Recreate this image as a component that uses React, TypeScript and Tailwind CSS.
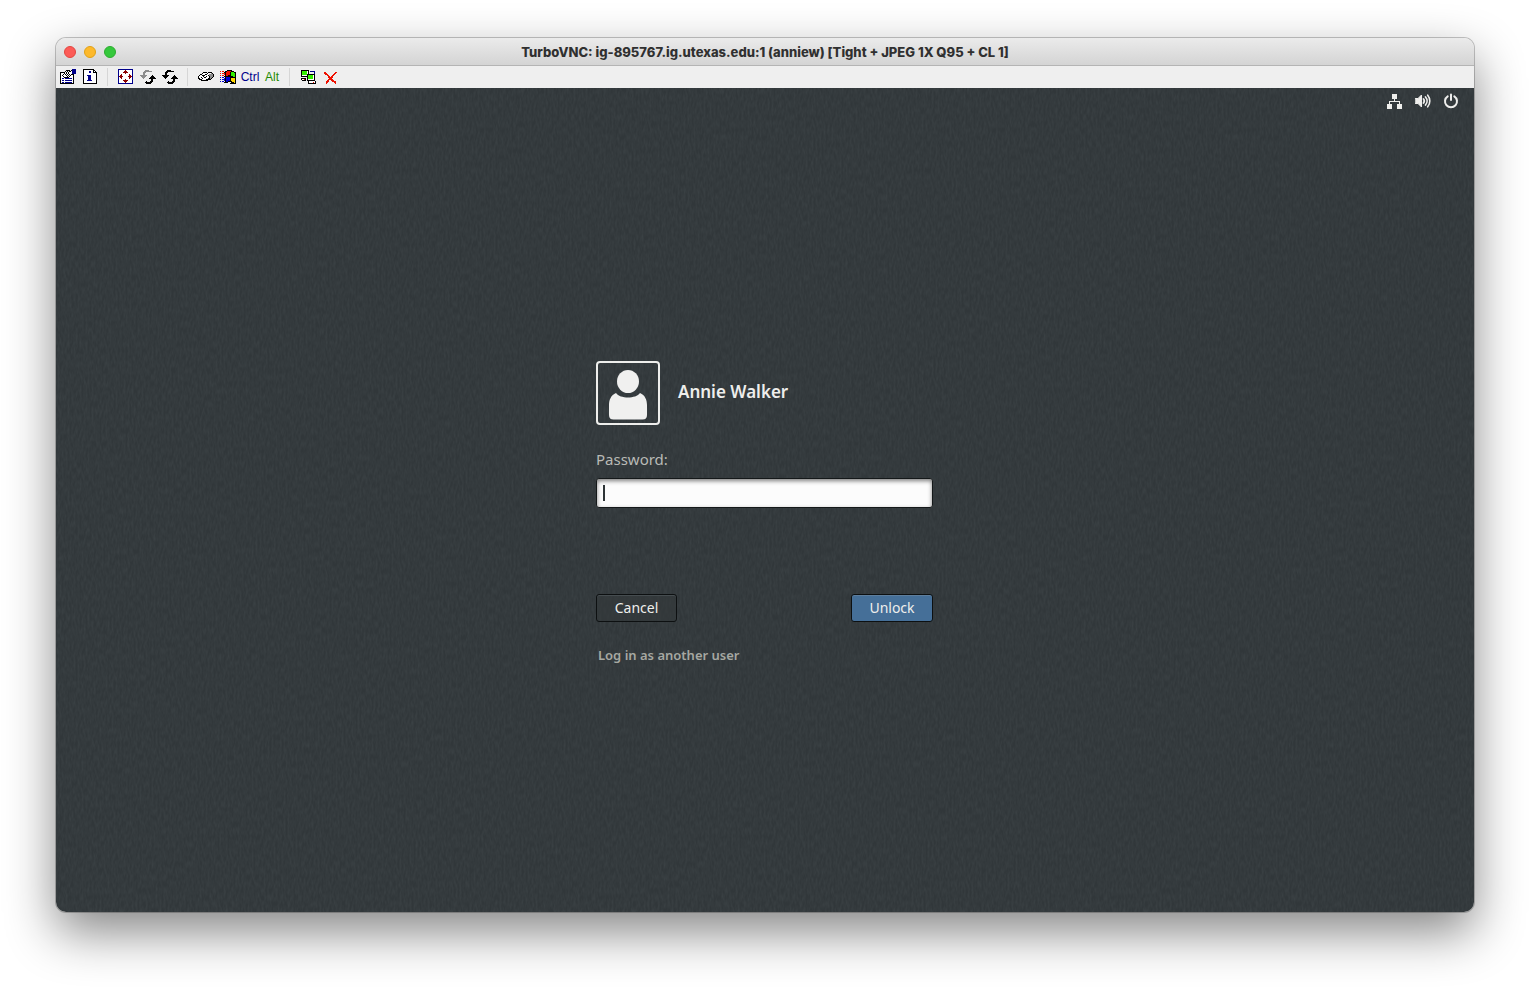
import type { ReactNode } from 'react';

const palette: Record<string, string> = {
  K: '#000000',
  B: '#00008b',
  W: '#ffffff',
  G: '#8c8c8c',
  M: '#8b0000',
  R: '#ee1100',
  L: '#33ee00',
  Y: '#ffd800',
  U: '#0000d0',
};

function PixelIcon({ rows }: { rows: string[] }) {
  return (
    <svg viewBox="0 0 16 16" className="size-4" shapeRendering="crispEdges" aria-hidden="true">
      {rows.flatMap((row, y) =>
        row
          .split('')
          .map((c, x) =>
            palette[c] ? <rect key={`${x}-${y}`} x={x} y={y} width="1" height="1" fill={palette[c]} /> : null,
          ),
      )}
    </svg>
  );
}

const options = [
  '............BBBB',
  '......KKKK.KBBBB',
  '.....KWKWKKWBBBB',
  'KKKKKWKWKWWWBBBB',
  'KWWWKWKWKWWWBBBB',
  'KWWKWKWKWKWKKK..',
  'KWKWWWKWKWKWWK..',
  'KWWKWWWKWKWWWK..',
  'KWWWKKKKKWWWWK..',
  'KWBBWBBBBBBBWK..',
  'KWWWWWWWWWWWWK..',
  'KWBBWBBBBBBBWK..',
  'KWWWWWWWWWWWWK..',
  'KWBBWBBBBBBBWK..',
  'KKKKKKKKKKKKKK..',
];

const info = [
  '.KKKKKKKKKKK....',
  '.KWWWWWWWWWKK...',
  '.KWWWWWBBWWKWK..',
  '.KWWWWWBBWWKKKK.',
  '.KWWWWWWWWWWWWK.',
  '.KWWWWWWWWWWWWK.',
  '.KWWWBBBBWWWWWK.',
  '.KWWWWBBBWWWWWK.',
  '.KWWWWBBBWWWWWK.',
  '.KWWWWBBBWWWWWK.',
  '.KWWWWBBBWWWWWK.',
  '.KWWWBBBBBWWWWK.',
  '.KWWWWWWWWWWWWK.',
  '.KWWWWWWWWWWWWK.',
  '.KKKKKKKKKKKKKK.',
];

const fullScreen = [
  'BBBBBBBBBBBBBBB.',
  'BWWWWWWMWWWWWWB.',
  'BWWWWWMMMWWWWWB.',
  'BWWWWMMMMMWWWWB.',
  'BWWWWWWMWWWWWWB.',
  'BWWMWWWWWWWMWWB.',
  'BWMMWWWWWWWMMWB.',
  'BMMMMWWWWWMMMMB.',
  'BWMMWWWWWWWMMWB.',
  'BWWMWWWWWWWMWWB.',
  'BWWWWWWMWWWWWWB.',
  'BWWWWMMMMMWWWWB.',
  'BWWWWWMMMWWWWWB.',
  'BWWWWWWMWWWWWWB.',
  'BBBBBBBBBBBBBBB.',
];

const refreshScreen = [
  '................',
  '.....GGGG.......',
  '....GGGGGGGG....',
  '...GGG..........',
  '...GG...........',
  '...GG...........',
  'GGGGGGG.....K...',
  '.GGGGG.....KKK..',
  '..GGG.....KKKKK.',
  '...G.....KKKKKKK',
  '...........KK...',
  '...........KK...',
  '......K...KKK...',
  '.....KKKKKKK....',
  '......KKKKK.....',
];

const refreshAll = refreshScreen.map((row) => row.replace(/G/g, 'K'));

const connection = [
  '................',
  '................',
  '................',
  '.....KKKK.KKKK..',
  '....KWWWWKWWWGK.',
  '..KKWWWKKWWGGGGK',
  '.KWWKKKWWWKGGGGK',
  'KWWWWKWWKWWKGGGK',
  'KWWKWWKKWWWKGGK.',
  'KKWWKWWWWWKKGK..',
  '.KKKWWWWKKKKK...',
  '...KKKKKKK......',
];

const windowsKey = [
  '................',
  '.......KKKKK....',
  'R.RR.KKRRRRKKK..',
  '....KKRRRRKLLLKK',
  'R.RRRKRRRRKLLLLK',
  '....RKRRRRKLLLLK',
  'R.RR.KRRKKKLLLLK',
  '....KKKKKKKKKLLK',
  'U.UU.KUUUUKKKKKK',
  '....UKUUUUKYYYYK',
  'U.UUUKUUUUKYYYYK',
  '....UKUUUUKYYYYK',
  'U.UU.KUUKKKKYYYK',
  '....KKKK...KKKYK',
  '..........KKKKKK',
];

const ctrlAltDel = [
  '................',
  '.KKKKKKKK.......',
  '.KLLLLLWK.BBBBB.',
  '.KLLLLLWK.....B.',
  '.KLLLLLWK.....B.',
  '.KLLLLLKKKKKKKK.',
  '.KWWWWWKLLLLLWK.',
  '.KKKKKKKLLLLLWK.',
  '.......KLLLLLWK.',
  '.KKKKK.KLLLLLWK.',
  '.KWWRK.KWWWWWWK.',
  '..KKKK.KKKKKKKK.',
  '........KWWWWWWK',
  '........KWWWWRWK',
  '........KKKKKKKK',
];

const disconnect = [
  '................',
  '................',
  '................',
  '..RR.........RR.',
  '..RRR.......RR..',
  '...RRR.....RR...',
  '.....RR...RR....',
  '......RR.RR.....',
  '......RRRRR.....',
  '.......RRR......',
  '......RRRRR.....',
  '.....RR..RRR....',
  '....RRR...RRRR..',
  '....RR......RR..',
  '....R........R..',
];

function Tool({ label, children }: { label: string; children: ReactNode }) {
  return (
    <button type="button" aria-label={label} title={label} className="flex h-5 w-[22px] items-center justify-center">
      {children}
    </button>
  );
}

function Separator() {
  return <span className="mr-[7px] ml-1.5 h-[18px] w-px bg-[#d6d6d6]" />;
}

function TitleBar() {
  return (
    <header className="grid h-7 shrink-0 grid-cols-[1fr_auto_1fr] items-center border-b border-[#b4b4b4] bg-linear-to-b from-[#ebebeb] to-[#d4d4d4] px-2">
      <div className="flex gap-2">
        <button type="button" aria-label="Close" className="size-3 rounded-full border border-[#e2463f] bg-[#fc5b57]" />
        <button type="button" aria-label="Minimize" className="size-3 rounded-full border border-[#e1a116] bg-[#fdb92c]" />
        <button type="button" aria-label="Zoom" className="size-3 rounded-full border border-[#2dac2f] bg-[#35c83c]" />
      </div>
      <h1 className="font-['Inter',sans-serif] text-[13px] leading-5 font-extrabold whitespace-nowrap text-[#303030]">
        TurboVNC: ig-895767.ig.utexas.edu:1 (anniew) [Tight + JPEG 1X Q95 + CL 1]
      </h1>
    </header>
  );
}

function Toolbar() {
  return (
    <nav
      aria-label="Viewer tools"
      className="flex h-[22px] shrink-0 items-center bg-[#efefef] font-['Liberation_Sans',sans-serif] text-xs"
    >
      <div className="flex pl-px">
        <Tool label="Connection options"><PixelIcon rows={options} /></Tool>
        <Tool label="Connection info"><PixelIcon rows={info} /></Tool>
      </div>
      <Separator />
      <div className="flex">
        <Tool label="Full screen"><PixelIcon rows={fullScreen} /></Tool>
        <Tool label="Request screen refresh"><PixelIcon rows={refreshScreen} /></Tool>
        <Tool label="Request lossless refresh"><PixelIcon rows={refreshAll} /></Tool>
      </div>
      <Separator />
      <div className="flex">
        <Tool label="New connection"><PixelIcon rows={connection} /></Tool>
        <Tool label="Windows key"><PixelIcon rows={windowsKey} /></Tool>
        <button type="button" className="h-5 w-[22px] text-[#00008b]">Ctrl</button>
        <button type="button" className="h-5 w-[22px] text-[#1d8a00]">Alt</button>
      </div>
      <Separator />
      <div className="flex">
        <Tool label="Send Ctrl-Alt-Del"><PixelIcon rows={ctrlAltDel} /></Tool>
        <Tool label="Disconnect"><PixelIcon rows={disconnect} /></Tool>
      </div>
    </nav>
  );
}

function WallpaperGrain() {
  return (
    <svg className="pointer-events-none absolute inset-0 size-full" aria-hidden="true">
      <filter id="grain" x="0" y="0" width="100%" height="100%">
        <feTurbulence type="fractalNoise" baseFrequency="0.5 0.15" numOctaves="2" seed="4" />
        <feColorMatrix values="0 0 0 0 0.6  0 0 0 0 0.7  0 0 0 0 0.72  0.1 0 0 0 -0.03" />
      </filter>
      <rect width="100%" height="100%" filter="url(#grain)" />
    </svg>
  );
}

function StatusArea() {
  return (
    <div className="relative flex h-[26px] shrink-0 items-center justify-end gap-3 pr-[15px] text-[#eeeeec]">
      <button type="button" aria-label="Network">
        <svg viewBox="0 0 16 16" className="size-4" fill="currentColor">
          <path d="M5 1h5v5H8v2h5v3h2v5h-5v-5h2V9H3v2h2v5H0v-5h2V8h5V6H5z" />
        </svg>
      </button>
      <button type="button" aria-label="Volume">
        <svg viewBox="0 0 16 16" className="size-4" fill="none" stroke="currentColor" strokeLinecap="round">
          <path d="M0.500 5.500h2.500l3.500-3.500v12l-3.500-3.500h-2.500z" fill="currentColor" strokeWidth="1" />
          <path d="M8.500 6a3.200 3.200 0 0 1 0 4" strokeWidth="1.800" />
          <path d="M10.500 4a6 6 0 0 1 0 8" strokeWidth="1.700" />
          <path d="M12.700 2.200a9 9 0 0 1 0 11.600" strokeWidth="1.600" />
        </svg>
      </button>
      <button type="button" aria-label="Power">
        <svg viewBox="0 0 16 16" className="size-4" fill="none" stroke="currentColor" strokeWidth="2" strokeLinecap="round">
          <path d="M8 1.500v5.500" />
          <path d="M4.700 3.300a6 6 0 1 0 6.600 0" />
        </svg>
      </button>
    </div>
  );
}

function UnlockForm() {
  return (
    <form className="flex w-[338px] flex-col items-start pr-px" onSubmit={(e) => e.preventDefault()}>
      <div className="flex items-center gap-[18px]">
        <div className="size-16 rounded-[4px] border-2 border-[#eeeeec]">
          <svg viewBox="0 0 60 60" className="size-full" fill="#f0f0ef" aria-hidden="true">
            <path d="M18 30C22 36 38 36 42 30C47 32 49 37 49 42V52Q49 56.500 44.500 56.500H15.500Q11 56.500 11 52V42C11 37 13 32 18 30Z" />
            <circle cx="30" cy="19" r="13" fill="#353b3e" />
            <ellipse cx="30" cy="18.500" rx="11" ry="11.500" />
          </svg>
        </div>
        <span className="pb-0.5 text-[17px] leading-6 font-semibold text-[#eeeeec]">Annie Walker</span>
      </div>
      <label htmlFor="password" className="mt-[22px] text-[15px] leading-6 text-[#b9bab6]">
        Password:
      </label>
      <div className="relative mt-[7px] w-full">
        <input
          id="password"
          type="password"
          className="block h-[30px] w-full rounded-[3px] border border-[#15191a] bg-[#fcfcfc] px-1.5 text-sm text-[#2e3436] shadow-[inset_0_2px_4px_rgba(0,0,0,0.5)] outline-none"
        />
        <span className="pointer-events-none absolute top-[7px] left-[7px] h-4 w-0.5 bg-[#2e3436]" />
      </div>
      <div className="mt-[86px] flex w-full justify-between text-sm text-[#eeeeec]">
        <button
          type="button"
          className="h-7 w-[81px] rounded-[3px] border border-[#0d1011] bg-[#33393b]/60 shadow-[inset_0_1px_0_#454c4f]"
        >
          Cancel
        </button>
        <button
          type="submit"
          className="h-7 w-[82px] rounded-[3px] border border-[#0d1011] bg-[#456f98] shadow-[inset_0_1px_0_#5d7e9d]"
        >
          Unlock
        </button>
      </div>
      <a href="#login" className="mt-[23px] mb-px ml-0.5 text-[13px] leading-5 font-semibold text-[#a6a8a2]">
        Log in as another user
      </a>
    </form>
  );
}

export default function App() {
  return (
    <div className="flex min-h-screen flex-col bg-white px-14 pt-[38px] pb-[75px]">
      <div className="flex flex-1 flex-col overflow-hidden rounded-[10px] shadow-[0_0_0_1px_rgba(0,0,0,0.22),0_20px_50px_rgba(0,0,0,0.48)]">
        <TitleBar />
        <Toolbar />
        <main className="relative flex flex-1 flex-col bg-[#31373a] font-['Noto_Sans',sans-serif]">
          <WallpaperGrain />
          <StatusArea />
          <div className="relative flex flex-1 items-center justify-center">
            <UnlockForm />
          </div>
        </main>
      </div>
    </div>
  );
}
